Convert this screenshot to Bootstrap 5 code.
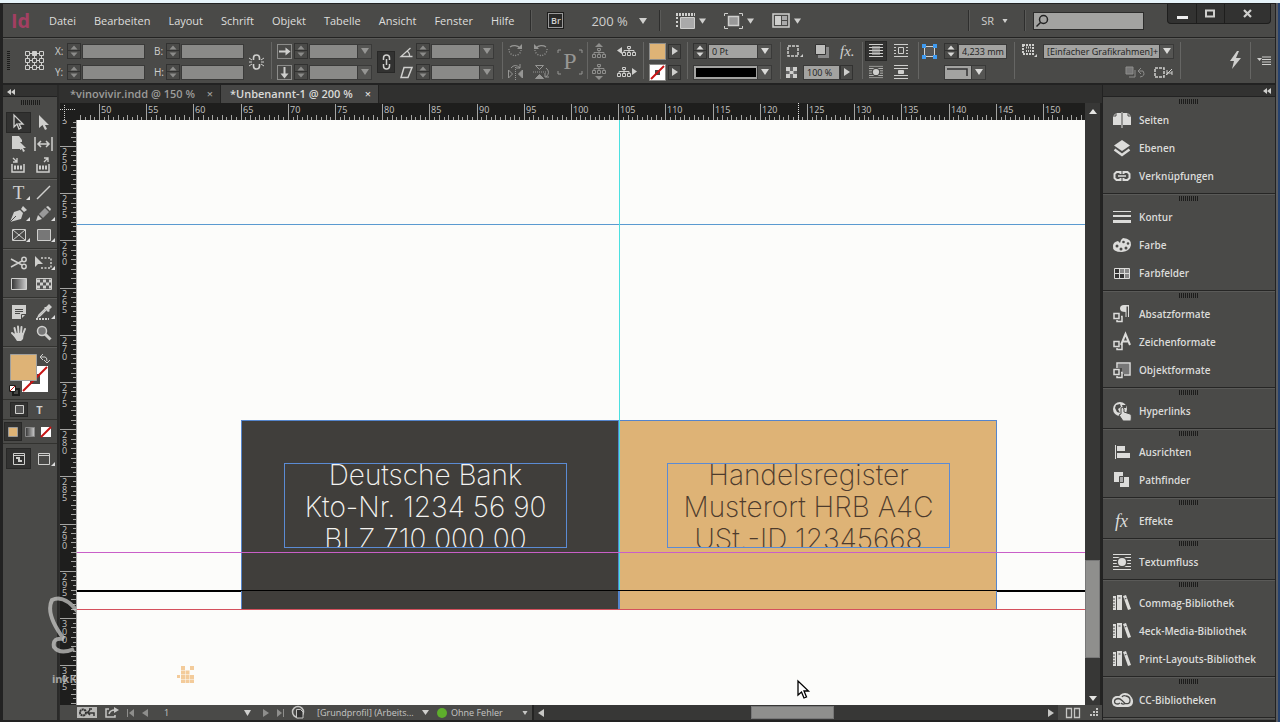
<!DOCTYPE html>
<html lang="de">
<head>
<meta charset="utf-8">
<meta name="viewport" content="width=device-width, initial-scale=1">
<title>Unbenannt-1 @ 200 %</title>
<link rel="stylesheet" href="https://cdn.jsdelivr.net/npm/bootstrap@5.3.0/dist/css/bootstrap.min.css">
<style>
:root{--panel:#4a4a48;--edge:#2a2a29;--ink:#cfcfcd;--field:#a3a3a1;--dim:#8a8a88;--tan:#deb376}
body{height:100vh;min-height:600px;overflow:hidden;font-family:"Open Sans","Noto Sans",sans-serif;font-size:11px;line-height:16px;color:var(--ink);
 background:linear-gradient(to left,#26426f 0 2px,#5b5d60 2px 4px,#222 4px 5px,#222 5px)}
button,select,input{font:inherit;color:inherit;border:0;background:none;padding:0;margin:0;border-radius:0}
select,input{appearance:none;min-width:0}
svg{display:block;overflow:visible}
.ico{fill:currentColor;stroke:none;flex:none}
.ln{fill:none;stroke:currentColor}
.faded{color:#8e8e8c}
.skyline{height:3px;background:#e6f3f9}
.appwin{margin:1px 5px 2px 3px;min-height:0}
.appwin,.minh{min-height:0}
.minw{min-width:0}
.menubar{height:33px;background:var(--panel);padding-left:8px;position:relative}
.menubar .vsep{height:21px}
.brand{font-size:20px;line-height:30px;font-weight:700;color:#a23f62;width:38px}
.brand:hover{color:#a23f62}
.menus{gap:18px}
.menus a{color:#dededc;text-decoration:none}
.userarea{margin-right:131px}
.vsep{width:1px;background:#2e2e2d;box-shadow:1px 0 #5a5a58;flex:none}
.bridge{border:1px solid #1d1d1c;outline:1px solid #999;outline-offset:-2px;width:17px;height:17px;font-size:9px;line-height:15px;background:#292928;font-weight:600}
.zoomsel{width:60px;margin-left:27px;font-size:13px;line-height:18px;background:url("data:image/svg+xml,%3Csvg xmlns='http://www.w3.org/2000/svg' width='8' height='6'%3E%3Cpath d='M0 0h8L4 6z' fill='%23d0d0ce'/%3E%3C/svg%3E") no-repeat right 4px center}
.viewbtn{margin-left:18px}
.find{width:111px;height:18px;background:var(--field);border:1px solid #2c2c2b;padding-left:20px;color:#222}
.findwrap svg{position:absolute;left:2px;top:2px;color:#222}
.winbtns{position:absolute;right:4px;top:0;height:20px;background:#323231;border:1px solid #1e1e1d;border-top:0;border-radius:0 0 4px 4px}
.winbtns button{width:28px;border-left:1px solid #1e1e1d}
.winbtns button:first-child{border-left:0}
.winbtns button:last-child{width:46px}

.ctl{height:46px;background:var(--panel);border-top:1px solid #232322;box-shadow:inset 0 1px #5a5a58;padding:5px 4px 0 4px;margin-bottom:2px}
.ctl>*{flex:none}
.ctl .vsep{height:37px;background:#666664;box-shadow:none;margin-top:-1px}
.vgrip{width:3px;height:20px;background:repeating-linear-gradient(#1c1c1b 0 1px,transparent 1px 2px)}
.refpoint{margin-left:15px}
.unlink{margin:11px 7px 0 5px}
.linkbtn{width:18px;height:22px;margin:8px 0 0 5px;place-items:center}
.grp{display:grid;grid-template-rows:16px 16px;row-gap:5px;align-items:center;justify-items:start;font-size:10px}
.g1{grid-template-columns:12px 15px 63px 9px 12px 15px 63px;margin-left:11px}
.g2{grid-template-columns:17px 15px 63px;margin-left:5px}
.g3{grid-template-columns:16px 15px 63px;margin:0 8px 0 5px}
.g4{grid-template-columns:26px 18px;margin-left:4px;color:#969694}
.g5{grid-template-columns:25px 20px;margin:0 6px 0 4px}
.g6{grid-template-columns:19px 13px;margin:0 6px 0 5px}
.g7{grid-template-columns:15px 64px;margin:0 8px 0 5px}
.g8{grid-template-columns:17px 37px 15px;margin:0 7px 0 5px}
.g9{grid-template-columns:22px 16px;column-gap:7px;margin:0 8px 0 2px}
.g10{grid-template-columns:22px 14px 49px;margin:0 7px 0 3px}
.g11{grid-template-columns:21px 131px;margin:0 6px 0 7px}
.wide{grid-column:span 2}
.spin{width:14px;height:16px;border:1px solid #323231;background:linear-gradient(transparent 6px,#323231 6px 7px,transparent 7px);color:#8c8c8a}
.spin.on{color:#d8d8d6}
.fld{width:100%;height:15px;background:var(--dim);border:1px solid #3a3a39;color:#1c1c1b;font-size:9px;line-height:13px;padding-left:3px}
.fld.on{background-color:var(--field)}
.cmb{background:url("data:image/svg+xml,%3Csvg xmlns='http://www.w3.org/2000/svg' width='15' height='15'%3E%3Cpath d='M0 0h15v15H0z' fill='%23555553'/%3E%3Cpath d='M0 0h1v15H0z' fill='%233a3a39'/%3E%3Cpath d='M4 4h8L8 10z' fill='%23959593'/%3E%3C/svg%3E") no-repeat right -1px center var(--dim)}
.cmb.on{background-image:url("data:image/svg+xml,%3Csvg xmlns='http://www.w3.org/2000/svg' width='15' height='15'%3E%3Cpath d='M0 0h15v15H0z' fill='%23555553'/%3E%3Cpath d='M0 0h1v15H0z' fill='%233a3a39'/%3E%3Cpath d='M4 4h8L8 10z' fill='%23dadad8'/%3E%3C/svg%3E")}
.strokewrap{width:100%;position:relative}
.strokewrap::after{content:"";position:absolute;left:3px;right:16px;top:3px;bottom:3px;background:#000;pointer-events:none}
.strokewrap .fld{display:block}
.cornersel{width:42px}
.step{width:13px;height:15px;border:1px solid #323231;display:grid;place-items:center}
.chip{width:17px;height:17px;border:1px solid #8c8c8a;background:var(--tan)}
.down{background:#323231;border:1px solid #282827}
.wrapbtn{height:20px;place-items:center}
.pbox{width:26px;font:24px/36px "Liberation Serif",serif;color:#969694;height:37px;text-align:center;margin:0 4px 0 6px}
.pbox svg{top:6px}
.fx{font:italic 15px/16px "Liberation Serif",serif}
.boltsep{margin-left:9px}
.flyout{margin:13px 0 0 6px}

.dockhead{height:12px;background:#323231;border-bottom:1px solid #222}
.grip{height:5px;width:19px;background:repeating-linear-gradient(to right,#1c1c1b 0 1px,transparent 1px 2px)}
.tools{width:56px;background:var(--panel);border-right:2px solid #2a2a29}
.tools>.grip{margin:3px auto 4px}
.toolset{display:grid;grid-template-columns:25px 25px;grid-auto-rows:21px;padding:3px 2px 3px 3px;border-bottom:1px solid #32322f;box-shadow:0 1px #5c5c5a}
.toolset button{display:grid;place-items:center;position:relative}
.toolset .more::after{content:"";position:absolute;right:1px;bottom:3px;border:2px solid transparent;border-right-color:#ddd;border-bottom-color:#ddd}
.typetool{font:19px/20px "Liberation Serif",serif}
.inks{height:53px;padding:6px 0 0 5px;border-bottom:1px solid #32322f}
.modes{height:20px;padding:0 3px;border-bottom:1px solid #32322f}
.modes button{display:grid;place-items:center;height:19px;width:23px}
.modes .boxmode{width:18px;height:15px}
.inkmodes{height:24px;padding-left:1px}
.inkmodes button{width:16px}
.inkmodes button.down{width:18px}

.work{background:#30302f;padding-left:1px}
.tabs{height:18px;background:#30302f;font-weight:600}
.tabs .doctab{width:161px;padding:0 5px 0 10px;color:#9c9c9a;border-right:1px solid #232322}
.tabs .doctab.cur{width:158px;padding:0 5px 0 9px;background:#464645;color:#dadad8}
.tabs button{width:10px;line-height:12px}
.tabs a{color:inherit;text-decoration:none}
.rulers{height:17px;background:#1e1e1d}
.rcorner{width:17px}
.rleft{width:17px;background:#1e1e1d;border-right:1px solid #aaa}
.rulers text,.rleft text{font-size:9px;fill:#c4c4c2}
.rule{stroke:#a4a4a2;stroke-width:1;shape-rendering:crispEdges}
.sheet{background:#fcfcfa;position:relative;overflow:hidden}
.sheet>*{position:absolute}
.guide{left:0;right:0;height:1px}
.guide.rowline{top:104px;background:#5a9ad0}
.guide.margin{top:432px;background:#c95fc8;margin:0}
.guide.edgeline{top:470px;background:#000}
.edgeleft,.edgeright{top:471px;height:1px;background:#000}
.edgeleft{left:0;width:164px}
.edgeright{left:920px;right:0}
.guide.bleed{top:489px;background:#d4505c}
.midline{left:542px;top:0;width:1px;height:471px;background:#4be0e0}
.art{top:300px;width:378px;height:190px;border:1px solid #5585cc;border-bottom:0}
.art.dark{left:164px;background:#403e3b}
.art.gold{left:542px;background:var(--tan)}
.frame{top:343px;width:283px;height:85px;border:1px solid #5b8bd4;overflow:hidden;text-align:center;font:200 28px/32px Inter,"Open Sans",sans-serif;white-space:nowrap}
.frame div{margin:-5px -20px 0}
.frame.dark{left:207px;color:#f4f3f0}
.frame.gold{left:590px;color:#4d3b2d}
.pixmark{left:100px;top:546px}
.pointer{left:720px;top:560px}
.vbar{width:17px;background:#373736;border-right:2px solid #232322}
.vbar svg:first-child{margin-top:6px}
.thumb{background:#8f8f8d;border:1px solid #777}
.v1{flex:448}.v2{flex:96}.v3{flex:38}
.h1s{flex:211}.h2s{flex:82;height:13px}.h3s{flex:218}
.status{height:15px;background:var(--panel);font-size:9px;line-height:15px;color:#c6c6c4}
.status>*{flex:none}
.settings{margin-left:17px}
.pagesel{width:87px;margin:0 12px 0 8px;background:url("data:image/svg+xml,%3Csvg xmlns='http://www.w3.org/2000/svg' width='7' height='6'%3E%3Cpath d='M0 0h7L3.500 6z' fill='%23d0d0ce'/%3E%3C/svg%3E") no-repeat right center}
.flight{width:112px;margin-left:12px;background:url("data:image/svg+xml,%3Csvg xmlns='http://www.w3.org/2000/svg' width='7' height='5'%3E%3Cpath d='M0 0h7L3.500 5z' fill='%23d0d0ce'/%3E%3C/svg%3E") no-repeat right center}
.lamp{width:10px;height:10px;background:#5eae2c}
.errors{width:77px;margin:0 4px 0 0}
.hbar{background:#373736;border-left:2px solid #242423}
.watermark{position:absolute;left:48px;bottom:35px;width:28px;height:91px;overflow:hidden;color:#d0d0ce;opacity:.7;font-size:11px;font-weight:700}

.dock{width:173px;background:var(--panel);border-left:1px solid #222}
.pgroup{padding:9px 0 3px;border-bottom:1px solid #262625;box-shadow:0 1px #5a5a58;position:relative}
.pgroup .grip{position:absolute;left:76px;top:2px}
.pgroup button{display:flex;align-items:center;gap:8px;height:28px;padding-left:10px;width:100%;font-size:10px;font-weight:600;text-align:left;color:#dcdcda}
.fxicon{width:18px;padding-left:2px;font:italic 18px/18px "Liberation Serif",serif}
</style>
</head>
<body class="d-flex flex-column">
<svg width="0" height="0" class="position-absolute" aria-hidden="true">
 <symbol id="updn" viewBox="0 0 12 14"><path d="M2.500 5.500h7L6 1.500zM2.500 8.500h7L6 12.500z"/></symbol>
 <symbol id="dn" viewBox="0 0 8 6"><path d="M0 0h8L4 6z"/></symbol>
 <symbol id="rt" viewBox="0 0 6 8"><path d="M0 0v8l6-4z"/></symbol>
 <symbol id="lt" viewBox="0 0 6 8"><path d="M6 0v8L0 4z"/></symbol>
 <symbol id="dbl" viewBox="0 0 8 6"><path d="M4 0v6L0 3zM8 0v6L4 3z"/></symbol>
 <symbol id="tree" viewBox="0 0 14 10"><path class="ln" d="M5.500.500h3v2h-3zM.5 6.500h3v3h-3zM5.500 6.500h3v3h-3zM10.500 6.500h3v3h-3zM7 3v3M2 6V4.500h10V6"/></symbol>
 <symbol id="books" viewBox="0 0 18 16"><path d="M0 1h3v14H0zM4 0h5v15H4zM10 1l3-1 5 14-3 1z"/><path d="M1 3v10M5.500 3h2M11.500 4l2-.6" stroke="#4a4a48" fill="none" stroke-dasharray="2 1"/></symbol>
 <symbol id="wrapc" viewBox="0 0 18 16"><path class="ln" stroke-width="1" d="M0 .5h18M0 3.500h18M0 6.500h4M14 6.500h4M0 9.500h4M14 9.500h4M0 12.500h18M0 15.500h18"/><circle cx="9" cy="8" r="5.500" fill="#4a4a48"/><circle cx="9" cy="8" r="4"/></symbol>
 <symbol id="style" viewBox="0 0 18 18"><path class="ln" stroke-width="1.500" d="M1 8.500h5v5H1z"/><path class="ln" stroke-width="1.500" d="M8 11.500h1v5H4V15"/></symbol>
</svg>
<div class="skyline flex-shrink-0"></div>
<div class="appwin d-flex flex-column flex-grow-1">

<header class="menubar d-flex align-items-center flex-shrink-0">
 <a class="brand text-decoration-none" href="#">Id</a>
 <nav class="menus d-flex" aria-label="Hauptmenü">
  <a href="#">Datei</a><a href="#">Bearbeiten</a><a href="#">Layout</a><a href="#">Schrift</a><a href="#">Objekt</a><a href="#">Tabelle</a><a href="#">Ansicht</a><a href="#">Fenster</a><a href="#">Hilfe</a>
 </nav>
 <span class="vsep ms-3 me-3"></span>
 <button class="bridge" type="button">Br</button>
 <select class="zoomsel" aria-label="Zoomstufe"><option>200 %</option></select>
 <span class="vsep mx-2"></span>
 <button class="d-flex align-items-center gap-1 ms-2" type="button" aria-label="Anzeigeoptionen"><svg class="ico" width="19" height="16"><path d="M5 5h13v10H5z" fill="#aaa"/><path class="ln" d="M4.500 15.500V4.500h14v11z"/><path class="ln" d="M0 1.500h19" stroke-width="3" stroke-dasharray="2 1"/><path class="ln" d="M1 4v12" stroke-width="2" stroke-dasharray="2 2"/></svg><svg class="ico" width="7" height="6"><use href="#dn"/></svg></button>
 <button class="d-flex align-items-center gap-1 viewbtn" type="button" aria-label="Bildschirmmodus"><svg class="ico" width="19" height="16"><path d="M5 4h9v8H5z" fill="#999"/><path class="ln" d="M4.500 3.500h10v9h-10z" stroke-width="1.500"/><path class="ln" d="M.5 3V.5H4M15 .5h3.500V3M.5 13v2.500H4M15 15.500h3.500V13"/></svg><svg class="ico" width="7" height="6"><use href="#dn"/></svg></button>
 <button class="d-flex align-items-center gap-1 viewbtn" type="button" aria-label="Dokumente anordnen"><svg class="ico" width="18" height="15"><path class="ln" stroke-width="1.500" d="M1 1h16v13H1z"/><path d="M3 3h6v9H3z"/><path d="M10 3h5v4h-5zM10 8h5v4h-5z" fill="#aaa"/></svg><svg class="ico" width="7" height="6"><use href="#dn"/></svg></button>
 <div class="d-flex align-items-center ms-auto userarea">
  <span class="vsep me-2"></span>
  <button class="d-flex align-items-center gap-2 ms-1" type="button"><span>SR</span><svg class="ico" width="6" height="4" viewBox="0 0 8 6"><use href="#dn"/></svg></button>
  <span class="vsep ms-3 me-2"></span>
  <label class="findwrap position-relative"><input class="find" type="search" aria-label="Suche"><svg class="ln" width="14" height="14" stroke-width="1.500"><circle cx="8.500" cy="5.500" r="4"/><path d="M5.500 8.500L1.500 12.500"/></svg></label>
 </div>
 <div class="winbtns d-flex">
  <button type="button" aria-label="Minimieren"><svg class="ico mx-auto" width="11" height="12"><path d="M0 8h11v3H0z" fill="#eee"/></svg></button>
  <button type="button" aria-label="Maximieren"><svg class="ln mx-auto" width="11" height="9" stroke="#eee" stroke-width="2"><path d="M1 1.500h8v6H1z"/></svg></button>
  <button type="button" aria-label="Schließen"><svg class="ln mx-auto" width="10" height="9" stroke="#eee" stroke-width="2.200"><path d="M1 1l7 7M8 1L1 8"/></svg></button>
 </div>
</header>

<section class="ctl d-flex flex-shrink-0" aria-label="Steuerung">
 <span class="mt-2 vgrip"></span>
 <svg class="ln mt-2 refpoint" width="19" height="19"><path d="M2.500 2.500h14v14h-14zM2.500 9.500h14M9.500 2.500v14"/><path fill="#4a4a48" d="M.5.500h4v4h-4zM14.500.500h4v4h-4zM.5 7.500h4v4h-4zM7.500 7.500h4v4h-4zM14.500 7.500h4v4h-4zM.5 14.500h4v4h-4zM7.500 14.500h4v4h-4zM14.500 14.500h4v4h-4z"/><path fill="currentColor" d="M7.500.500h4v4h-4z"/></svg>
 <div class="grp g1">
  <label for="fx">X:</label><button class="spin" type="button" aria-label="X ändern"><svg class="ico" width="12" height="14"><use href="#updn"/></svg></button><input class="fld" id="fx"><i></i><label for="fb">B:</label><button class="spin" type="button" aria-label="B ändern"><svg class="ico" width="12" height="14"><use href="#updn"/></svg></button><input class="fld" id="fb">
  <label for="fy">Y:</label><button class="spin" type="button" aria-label="Y ändern"><svg class="ico" width="12" height="14"><use href="#updn"/></svg></button><input class="fld" id="fy"><i></i><label for="fh">H:</label><button class="spin" type="button" aria-label="H ändern"><svg class="ico" width="12" height="14"><use href="#updn"/></svg></button><input class="fld" id="fh">
 </div>
 <svg class="ln unlink" width="15" height="16" stroke-width="1.600"><path d="M4.500 6V4a3 3 0 0 1 6 0v2M4.500 10v2a3 3 0 0 0 6 0v-2"/><path stroke-width="1" d="M0 8h3M12 8h3M0 4l3 2M15 4l-3 2M0 12l3-2M15 12l-3-2"/></svg>
 <span class="vsep"></span>
 <div class="grp g2">
  <svg class="ln" width="15" height="15"><path stroke-dasharray="1 1" d="M.5.500h14v14H.5z"/><path stroke-width="2" d="M2 7.500h8"/><path fill="currentColor" stroke="none" d="M8.500 3.500l5 4-5 4z"/></svg><button class="spin" type="button" aria-label="Skalierung X"><svg class="ico" width="12" height="14"><use href="#updn"/></svg></button><select class="fld cmb" aria-label="X-Skalierung"><option></option></select>
  <svg class="ln" width="15" height="15"><path stroke-dasharray="1 1" d="M.5.500h14v14H.5z"/><path stroke-width="2" d="M7.500 2v8"/><path fill="currentColor" stroke="none" d="M3.500 8.500l4 5 4-5z"/></svg><button class="spin" type="button" aria-label="Skalierung Y"><svg class="ico" width="12" height="14"><use href="#updn"/></svg></button><select class="fld cmb" aria-label="Y-Skalierung"><option></option></select>
 </div>
 <button class="down d-grid linkbtn" type="button" aria-label="Proportionen verketten"><svg class="ln" width="9" height="16" stroke-width="1.500"><path d="M1.500 6V4a3 3 0 0 1 6 0v2M1.500 10v2a3 3 0 0 0 6 0v-2M4.500 5v6"/></svg></button>
 <div class="grp g3">
  <svg class="ln" width="13" height="13" stroke-width="1.300"><path d="M12.500 11.500H1L10.500 3M7 6q3 2 2.500 5.500"/></svg><button class="spin" type="button" aria-label="Drehen"><svg class="ico" width="12" height="14"><use href="#updn"/></svg></button><select class="fld cmb" aria-label="Drehwinkel"><option></option></select>
  <svg class="ln" width="13" height="13" stroke-width="1.500"><path d="M4 1.500h8l-4 10H1z"/></svg><button class="spin" type="button" aria-label="Scheren"><svg class="ico" width="12" height="14"><use href="#updn"/></svg></button><select class="fld cmb" aria-label="Scherwinkel"><option></option></select>
 </div>
 <span class="vsep"></span>
 <div class="grp g4">
  <svg class="ln" width="17" height="16" stroke-width="1.300"><path d="M3 4a7 6 0 0 1 10 1"/><path stroke-dasharray="1 1.500" d="M14 7a6 6 0 1 1-12-1"/><path fill="currentColor" stroke="none" d="M10 6h5V1z"/></svg>
  <svg class="ln" width="17" height="16" stroke-width="1.300"><path d="M13 4a7 6 0 0 0-10 1"/><path stroke-dasharray="1 1.500" d="M2 7a6 6 0 1 0 12-1"/><path fill="currentColor" stroke="none" d="M6 6H1V1z"/></svg>
  <svg class="ln" width="17" height="16"><path d="M4 4q4-5 9 0M13 0v4H9" /><path stroke-dasharray="1 1" d="M8.500 3v13"/><path fill="currentColor" d="M15.500 6v8l-4-4z"/><path d="M1.500 6v8l4-4z"/></svg>
  <svg class="ln" width="17" height="16"><path d="M13 4q5 4 0 9M16 13h-4V9"/><path stroke-dasharray="1 1" d="M0 8h14"/><path fill="currentColor" d="M2.500 14.500h8l-4-4z"/><path d="M2.500 1.500h8l-4 4z"/></svg>
 </div>
 <div class="pbox position-relative">P<svg class="ln position-absolute start-0" width="26" height="26"><path d="M1 4V1h3M22 1h3v3M1 22v3h3M22 25h3v-3"/></svg></div>
 <span class="vsep"></span>
 <div class="grp g5">
  <svg class="ico faded" width="14" height="16"><path d="M3 4h8L7 0z"/><use href="#tree" y="5" width="14" height="10"/></svg>
  <svg class="ico" width="20" height="14"><path d="M5 3v7L0 6.500z"/><use href="#tree" x="5" y="2" width="14" height="10"/></svg>
  <svg class="ico faded" width="14" height="16"><path d="M3 12h8l-4 4z"/><use href="#tree" width="14" height="10"/></svg>
  <svg class="ico" width="20" height="14"><path d="M15 3v7l5-3.500z"/><use href="#tree" y="2" width="14" height="10"/></svg>
 </div>
 <span class="vsep"></span>
 <div class="grp g6">
  <span class="chip"></span><button class="step" type="button" aria-label="Fläche"><svg class="ico" width="6" height="8"><use href="#rt"/></svg></button>
  <svg width="17" height="17"><path fill="#fff" stroke="#8c8c8a" d="M.5.500h16v16H.5z"/><path fill="#4a4a48" d="M6 6h5v5H6z"/><path stroke="#c81414" stroke-width="2" d="M2 15L15 2"/></svg><button class="step" type="button" aria-label="Kontur"><svg class="ico" width="6" height="8"><use href="#rt"/></svg></button>
 </div>
 <span class="vsep"></span>
 <div class="grp g7">
  <button class="spin on" type="button" aria-label="Konturstärke ändern"><svg class="ico" width="12" height="14"><use href="#updn"/></svg></button><select class="fld cmb on" aria-label="Konturstärke"><option>0 Pt</option></select>
  <div class="strokewrap wide"><select class="fld cmb on" aria-label="Konturtyp"><option></option></select></div>
 </div>
 <span class="vsep"></span>
 <div class="grp g8">
  <svg class="ln" width="17" height="14" stroke-width="1.500"><path stroke-dasharray="3 1" d="M2 2h10v10H2z"/><path stroke="none" fill="currentColor" d="M14 13h3v-3z"/></svg>
  <svg class="mx-auto" width="14" height="14"><path fill="#888" d="M3 3h11v11H3z"/><path fill="#bdbdbb" stroke="#333" d="M.5.500h10v10H.5z"/></svg>
  <button class="fx" type="button">fx.</button>
  <svg class="ico" width="11" height="11"><path fill="#666" d="M0 0h11v11H0z"/><path d="M0 0h4v4H0zM7 0h4v4H7zM3.500 4h4v3h-4zM0 7h4v4H0zM7 7h4v4H7z"/></svg>
  <input class="fld on" aria-label="Deckkraft" value="100 %"><button class="step" type="button" aria-label="Deckkraft wählen"><svg class="ico" width="6" height="8"><use href="#rt"/></svg></button>
 </div>
 <span class="vsep"></span>
 <div class="grp g9">
  <button class="down w-100 d-grid wrapbtn" type="button" aria-label="Kein Textumfluss"><svg class="ln" width="14" height="14"><path d="M0 .5h14M0 3.500h14M0 6.500h14M0 9.500h14M0 12.500h14"/><path stroke-width="9" stroke="#bbb" d="M3 6.500h8" opacity=".6"/></svg></button>
  <svg class="ln" width="14" height="14"><path d="M0 .5h14M0 12.500h14M0 3.500h2M12 3.500h2M0 6.500h2M12 6.500h2M0 9.500h2M12 9.500h2M4.500 3.500h5v6h-5z"/></svg>
  <svg class="ico mx-auto" width="14" height="14" viewBox="0 0 18 16"><use href="#wrapc"/></svg>
  <svg class="ln" width="14" height="14"><path d="M0 .5h14M0 3.500h14M0 10.500h14M0 13.500h14"/><path fill="currentColor" d="M4.500 5.500h5v3h-5z"/></svg>
 </div>
 <span class="vsep"></span>
 <div class="grp g10">
  <svg class="ln" width="15" height="15"><path fill="#555" d="M2.500 2.500h10v10h-10z"/><path stroke="none" fill="#3f9af0" d="M0 0h4v4H0zM11 0h4v4h-4zM0 11h4v4H0zM11 11h4v4h-4z"/></svg><button class="spin on" type="button" aria-label="Eckenradius ändern"><svg class="ico" width="12" height="14"><use href="#updn"/></svg></button><input class="fld on" aria-label="Eckenradius" value="4,233 mm">
  <i></i><div class="wide position-relative"><select class="fld cmb on cornersel" aria-label="Eckenform"><option></option></select><svg class="position-absolute start-0 top-0" width="26" height="15"><path fill="none" stroke="#333" stroke-width="1.500" d="M3 5h20v7"/></svg></div>
 </div>
 <span class="vsep"></span>
 <div class="grp g11">
  <svg class="ln" width="15" height="14"><path stroke-width="2" stroke-dasharray="2 1" d="M1 1h10v9H1z"/><path stroke-width="2" stroke-dasharray="1 1" d="M4 3.500h5M4 7h5"/><path stroke="none" fill="currentColor" d="M12 13h3v-3z"/></svg>
  <select class="fld cmb on" aria-label="Objektformat"><option>[Einfacher Grafikrahmen]+</option></select>
  <div class="wide ms-auto d-flex gap-2"><svg class="ln faded" width="21" height="13"><path fill="#777" d="M1 1h7v7H1z"/><path d="M10 4v7H4M14 5h4q3 5-3 6M16 2l-3 3 3 3"/></svg><svg class="ln" width="20" height="13"><path stroke-width="1.500" stroke-dasharray="3 1" d="M1 2h9v9H1z"/><path d="M12 9l6-6M13 4v5M18 5v4M13 7h5"/></svg></div>
 </div>
 <span class="vsep"></span>
 <svg class="ico ms-auto mt-2" width="11" height="18"><path d="M7 0L0 10h4l-2 8 9-11H6l3-7z"/></svg>
 <span class="vsep boltsep"></span>
 <svg class="ico flyout" width="14" height="9"><path d="M0 2h5L2.500 5z"/><path class="ln" d="M5 1h9M5 3.500h9M5 6h9M5 8.500h9"/></svg>
</section>

<div class="d-flex flex-grow-1 minh">
 <aside class="tools flex-shrink-0" aria-label="Werkzeuge">
  <div class="dockhead ps-1 pt-1"><svg class="ico" width="8" height="6"><use href="#dbl"/></svg></div>
  <div class="grip"></div>
  <div class="toolset">
   <button class="down" type="button" aria-label="Auswahl"><svg class="ln" width="14" height="17"><path stroke-width="1.300" d="M2 1v12l3-3 2 5 2-1-2-4h4z"/></svg></button>
   <button type="button" aria-label="Direktauswahl"><svg class="ico" width="11" height="16"><path d="M1 0v13l3.500-3L7 15l2-1-2-4h4z"/></svg></button>
   <button type="button" aria-label="Seite"><svg class="ico" width="15" height="15"><path d="M1 0h7l3 4v2H9v7H1zM9 6l6 6h-3l2 3-2 1-1-3-2 1z"/></svg></button>
   <button type="button" aria-label="Lücke"><svg class="ln" width="19" height="14" stroke-width="2"><path d="M1 0v14M18 0v14M4 7h11M7 4L4 7l3 3M12 4l3 3-3 3" stroke-width="1.500"/></svg></button>
   <button type="button" aria-label="Inhaltsaufnahme"><svg class="ln" width="15" height="16"><path stroke-width="1.500" d="M1 7v8h12V7"/><path stroke-width="4" stroke-dasharray="2 1" d="M3 10.500h9"/><path stroke-width="1.300" d="M2 1l4 4M6 1v4H2"/></svg></button>
   <button type="button" aria-label="Inhaltsplatzierung"><svg class="ln" width="15" height="16"><path stroke-width="1.500" d="M1 7v8h12V7"/><path stroke-width="4" stroke-dasharray="2 1" d="M3 10.500h9"/><path stroke-width="1.300" d="M8 5l4-4M8 1h4v4"/></svg></button>
  </div>
  <div class="toolset">
   <button class="more typetool" type="button" aria-label="Text">T</button>
   <button type="button" aria-label="Linie"><svg class="ln" width="13" height="13" stroke-width="1.500"><path d="M0 13L13 0"/></svg></button>
   <button class="more" type="button" aria-label="Zeichenstift"><svg class="ico" width="17" height="16"><path d="M0 16L4 6l6-2 3 3-2 6z"/><path d="M11 3l2-3 4 4-3 2z"/><path stroke="#4a4a48" d="M0 16l6-6"/></svg></button>
   <button class="more" type="button" aria-label="Buntstift"><svg class="ico" width="15" height="15"><path d="M0 15l2-6 4 4z"/><path d="M3 8l6-6 4 4-6 6z" fill="#999"/><path d="M10 1l2-1 3 3-1 2z"/></svg></button>
   <button class="more" type="button" aria-label="Rechteckrahmen"><svg class="ln" width="14" height="12"><path d="M.5.500h13v11H.5zM1 1l12 10M13 1L1 11"/></svg></button>
   <button class="more" type="button" aria-label="Rechteck"><svg class="ln" width="14" height="12"><path fill="#777" d="M.5.500h13v11H.5z"/></svg></button>
  </div>
  <div class="toolset">
   <button type="button" aria-label="Schere"><svg class="ln" width="16" height="14" stroke-width="1.500"><path d="M0 3l11 6M0 11l11-6"/><circle cx="13" cy="3.500" r="2.200"/><circle cx="13" cy="10.500" r="2.200"/></svg></button>
   <button class="more" type="button" aria-label="Frei transformieren"><svg class="ln" width="17" height="14" stroke-width="1.500"><path stroke-dasharray="2 1.500" d="M6 2h10v10H5"/><path fill="currentColor" stroke="none" d="M0 0v11l3-3 5 0z"/></svg></button>
   <button type="button" aria-label="Verlaufsfarbfeld"><svg width="16" height="12"><defs><linearGradient id="gr"><stop stop-color="#333"/><stop offset="1" stop-color="#ccc"/></linearGradient></defs><path fill="url(#gr)" stroke="#d0d0ce" d="M.5.500h15v11H.5z"/></svg></button>
   <button type="button" aria-label="Weiche Verlaufskante"><svg class="ln" width="16" height="12"><path fill="#555" d="M.5.500h15v11H.5z"/><path stroke-width="3" stroke-dasharray="3 3" d="M1 3h14M4 6h11M1 9h14"/></svg></button>
  </div>
  <div class="toolset">
   <button type="button" aria-label="Notiz"><svg class="ico" width="14" height="14"><path d="M0 0h14v9l-5 5H0z"/><path stroke="#4a4a48" fill="none" d="M3 4.500h8M3 6.500h8M3 8.500h5M9.500 14V9.500H14"/></svg></button>
   <button class="more" type="button" aria-label="Pipette"><svg class="ico" width="16" height="16"><path d="M10 3l3-3 3 3-3 3 1 1-2 1-4-4 1-1z"/><path class="ln" stroke-width="1.300" d="M9 5l-6 6-1 2 2-1 6-6"/><path class="ln" stroke-width="2" stroke-dasharray="2 1" d="M0 15h13"/></svg></button>
   <button type="button" aria-label="Hand"><svg class="ln" width="16" height="16" stroke-width="2" stroke-linecap="round"><path d="M5 9L3.500 3M7.500 8L7 1.500M10 8l.5-6M12 9l2-5M4 11L1 8"/><path fill="currentColor" stroke="none" d="M4 8h9l-1 6-2 2H6l-4-6z"/></svg></button>
   <button type="button" aria-label="Zoom"><svg class="ln" width="16" height="16"><circle cx="6" cy="6" r="4.500" fill="#777" stroke-width="1.500"/><path stroke-width="3" d="M9 9l5.500 5.500"/></svg></button>
  </div>
  <div class="inks">
   <svg width="45" height="46"><path fill="#fff" d="M14 13h26v26H14z"/><path fill="#4a4a48" d="M22 21h10v10H22z"/><path stroke="#c81414" stroke-width="2" d="M15 38L39 14"/><path fill="#deb376" stroke="#a0a09e" d="M2.500 1.500h26v26h-26z"/><path fill="none" stroke="#cfcfcd" d="M33 4h4q2 0 2 4M35 1l-3 3 3 3M36 7l3 3 3-3"/><path fill="none" stroke="#1c1c1b" stroke-width="2" d="M5 36h6v6H5z"/><path fill="#fff" stroke="#1c1c1b" d="M1.500 32.500h6v6h-6z"/><path stroke="#c81414" d="M2 38l5-5"/></svg>
  </div>
  <div class="modes d-flex align-items-center">
   <button class="down ms-1 boxmode" type="button" aria-label="Container"><svg class="ln" width="9" height="9"><path fill="#555" d="M.5.500h8v8h-8z"/></svg></button>
   <button class="fw-bold" type="button" aria-label="Text formatieren">T</button>
  </div>
  <div class="modes inkmodes d-flex align-items-center">
   <button class="down" type="button" aria-label="Farbe anwenden"><svg width="10" height="10"><path fill="#deb376" stroke="#999" d="M.5.500h9v9h-9z"/></svg></button>
   <button type="button" aria-label="Verlauf anwenden"><svg width="10" height="10"><path fill="url(#gr)" stroke="#888" d="M.5.500h9v9h-9z"/></svg></button>
   <button type="button" aria-label="Ohne"><svg width="10" height="10"><path fill="#fff" d="M0 0h10v10H0z"/><path stroke="#c81414" stroke-width="2" d="M0 10L10 0"/></svg></button>
  </div>
  <div class="toolset border-0 shadow-none pt-1">
   <button class="down" type="button" aria-label="Normal"><svg class="ln" width="12" height="12"><path d="M.5.500h11v11H.5zM.5 2.500h11"/><path stroke-width="2" d="M3 5h3v3h3"/></svg></button>
   <button class="more" type="button" aria-label="Vorschau"><svg class="ln" width="12" height="12"><path d="M.5.500h11v11H.5zM.5 2.500h11"/></svg></button>
  </div>
 </aside>

 <main class="work d-flex flex-column flex-grow-1 minw">
  <div class="tabs d-flex flex-shrink-0">
   <div class="doctab d-flex align-items-center justify-content-between"><a href="#">*vinovivir.indd @ 150 %</a><button type="button" aria-label="Tab schließen">×</button></div>
   <div class="doctab cur d-flex align-items-center justify-content-between"><a href="#">*Unbenannt-1 @ 200 %</a><button type="button" aria-label="Tab schließen">×</button></div>
  </div>
  <div class="d-flex flex-grow-1 minh">
   <div class="d-flex flex-column flex-grow-1 minw">
    <div class="rulers d-flex flex-shrink-0">
     <svg class="ln rcorner flex-shrink-0" width="17" height="17"><path stroke-dasharray="1 1" d="M4.500 2v15M0 6.500h16"/></svg>
     <div class="flex-grow-1 overflow-hidden"><svg id="hr" width="100%" height="17"></svg></div>
    </div>
    <div class="d-flex flex-grow-1 minh">
     <div class="rleft flex-shrink-0 overflow-hidden"><svg id="vr" width="16" height="100%"></svg></div>
     <div class="sheet flex-grow-1">
      <div class="art dark"></div>
      <div class="art gold"></div>
      <div class="frame dark"><div>Deutsche Bank<br>Kto-Nr. 1234 56 90<br>BLZ 710 000 00</div></div>
      <div class="frame gold"><div>Handelsregister<br>Musterort HRB A4C<br>USt.-ID 12345668</div></div>
      <div class="guide rowline"></div>
      <div class="midline"></div>
      <div class="guide margin"></div>
      <div class="guide edgeline"></div>
      <div class="edgeleft"></div>
      <div class="edgeright"></div>
      <div class="guide bleed"></div>
      <svg class="pixmark" width="17" height="17" fill="#f3cb9a"><path d="M4 0h4v4H4zM13 0h4v4h-4zM4 4.500h4v4H4zM8.500 4.500h4v4h-4zM0 9h3v3H0zM4 9h4v4H4zM8.500 9h4v4h-4zM13 9h4v4h-4zM4 13.500h4V17H4zM8.500 13.500h4V17h-4zM13 13.500h4V17h-4z"/></svg>
      <svg class="pointer" width="12" height="19"><path fill="#fff" stroke="#000" stroke-width="1.300" d="M1 1v14l3.500-3 2.500 6 2.500-1L7 11h4.500z"/></svg>
     </div>
    </div>
   </div>
   <div class="vbar d-flex flex-column flex-shrink-0">
    <svg class="ico mx-auto" width="8" height="5"><path d="M0 5h8L4 0z" fill="#e4e4e2"/></svg>
    <div class="v1"></div><div class="v2 thumb"></div><div class="v3"></div>
    <svg class="ico mx-auto mb-1" width="8" height="5"><path d="M0 0h8L4 5z" fill="#e4e4e2"/></svg>
   </div>
  </div>
  <footer class="status d-flex align-items-center flex-shrink-0">
   <svg class="settings" width="20" height="11"><path fill="#b8b8b6" d="M0 0h20v11H0z"/><circle cx="6" cy="5.500" r="3" fill="none" stroke="#333" stroke-width="2" stroke-dasharray="2 .5"/><path fill="none" stroke="#333" stroke-width="1.500" d="M17 9V6h-6M13 3l-2.500 2.500L13 8M12 2h3"/></svg>
   <svg class="ln ms-2" width="14" height="11" stroke-width="1.500"><path d="M4 2H1v8h9V8M4 7q1-4 6-4"/><path fill="currentColor" stroke="none" d="M9 0l5 3-5 3z"/></svg>
   <svg class="ico faded ms-2" width="7" height="8"><path d="M0 0h1v8H0zM7 0v8L2 4z"/></svg>
   <svg class="ico faded ms-2" width="6" height="8"><use href="#lt"/></svg>
   <select class="pagesel ms-3" aria-label="Seite"><option>1</option></select>
   <svg class="ico faded" width="6" height="8"><use href="#rt"/></svg>
   <svg class="ico faded ms-2" width="7" height="8"><path d="M6 0h1v8H6zM0 0v8l5-4z"/></svg>
   <svg class="ln ms-2" width="13" height="13"><circle cx="6" cy="6" r="5.500" stroke-width="1.500"/><path fill="#333" d="M4.500 12V3.500h4L11 6v6z"/></svg>
   <select class="flight" aria-label="Preflight-Profil"><option>[Grundprofil] (Arbeits...</option></select>
   <span class="lamp rounded-circle ms-2 me-1"></span>
   <button class="errors d-flex align-items-center justify-content-between" type="button"><span>Ohne Fehler</span><svg class="ico" width="6" height="4" viewBox="0 0 8 6"><use href="#dn"/></svg></button>
   <div class="hbar d-flex align-items-center flex-grow-1 h-100 px-1">
    <svg class="ico" width="6" height="8"><use href="#lt"/></svg><div class="h1s"></div><div class="h2s thumb"></div><div class="h3s"></div><svg class="ico" width="6" height="8"><use href="#rt"/></svg>
   </div>
   <svg class="ln ms-2" width="14" height="10" stroke-width="1.300"><path d="M.5.500h5v9h-5zM8.500.500h5v9h-5z"/></svg>
   <svg class="ico ms-2 me-1" width="10" height="9" fill="#aaa"><path d="M8 0h2v2H8zM5 3h2v2H5zM8 3h2v2H8zM2 6h2v2H2zM5 6h2v2H5zM8 6h2v2H8z"/></svg>
  </footer>
 </main>

 <aside class="dock flex-shrink-0" aria-label="Bedienfelder">
  <div class="dockhead d-flex justify-content-end align-items-center pe-1"><svg class="ico" width="8" height="6"><use href="#dbl"/></svg></div>
  <div class="pgroup"><div class="grip"></div>
   <button type="button"><svg class="ico" width="18" height="16"><path d="M0 4l3-3h5v12H0zM18 4l-3-3h-5v12h8z"/><path d="M0 4h3V1M18 4h-3V1" stroke="#4a4a48" fill="none"/><path d="M8.500 0h1v16h-1z"/></svg>Seiten</button>
   <button type="button"><svg class="ico" width="18" height="17"><path d="M9 0l8 5.500L9 11 1 5.500z"/><path class="ln" stroke-width="2.500" d="M1.500 9.500L9 15l7.500-5.500"/></svg>Ebenen</button>
   <button type="button"><svg class="ln" width="18" height="12" stroke-width="2"><path d="M7.500 4V2H3.500L1.500 4v4l2 2h4V8M10.500 4V2h4l2 2v4l-2 2h-4V8"/><path stroke-width="1.500" d="M5 6h8"/></svg>Verknüpfungen</button></div>
  <div class="pgroup"><div class="grip"></div>
   <button type="button"><svg class="ico" width="18" height="13"><path d="M0 0h18v1H0zM0 4h18v2H0zM0 9h18v3H0z"/></svg>Kontur</button>
   <button type="button"><svg class="ico" width="18" height="14"><path d="M8 2l2-2q9 1 8 7t-9 7Q-1 14 0 8q0-4 5-5l2 2z"/><g fill="#4a4a48"><circle cx="4" cy="8" r="1.500"/><circle cx="8" cy="11" r="1.500"/><circle cx="13" cy="10" r="1.500"/><circle cx="15" cy="5.500" r="1.300"/><circle cx="10.500" cy="4" r="1.300"/></g></svg>Farbe</button>
   <button type="button"><svg class="ln" width="18" height="11"><path fill="#333" d="M1.500.500h15v10h-15z"/><path stroke="none" fill="#888" d="M7 1h4v4H7zM12 1h4v4h-4zM12 6h4v4h-4z"/><path d="M6.500.500v10M11.500.500v10M1.500 5.500h15"/></svg>Farbfelder</button></div>
  <div class="pgroup"><div class="grip"></div>
   <button type="button"><svg class="ico" width="18" height="18"><path d="M16 0v12h-1V1.500h-1.500V12h-1V7Q7 7 7 3.500T11 0z"/><use href="#style" width="18" height="18"/></svg>Absatzformate</button>
   <button type="button"><svg class="ico" width="18" height="18"><path class="ln" stroke-width="2" d="M8 12l4.500-11L17 12M10 8.500h5.500"/><use href="#style" width="18" height="18"/></svg>Zeichenformate</button>
   <button type="button"><svg class="ico" width="18" height="18"><path class="ln" stroke-width="1.500" d="M4 7V2h13v12h-6"/><path fill="#777" d="M5 3h11v10H9V7H5z"/><use href="#style" width="18" height="18"/></svg>Objektformate</button></div>
  <div class="pgroup"><div class="grip"></div>
   <button type="button"><svg class="ico" width="18" height="19"><circle cx="7" cy="7" r="7"/><path fill="#4a4a48" d="M3 3l4-1 1 3-3 2 2 4-3-1-2-4zM9 3h4v3h-3z"/><path stroke="#4a4a48" d="M8 6q2-2 3 1v3l6 2q2 0 1 7H10L6 13l2-1z"/></svg>Hyperlinks</button></div>
  <div class="pgroup"><div class="grip"></div>
   <button type="button"><svg class="ico" width="18" height="14"><path d="M2 0h1v14H2zM4 1h8v5H4zM4 8h13v5H4z"/></svg>Ausrichten</button>
   <button type="button"><svg class="ico" width="18" height="16"><path d="M1 0h9v5h6v10H7v-5H1z"/><path stroke="#4a4a48" fill="#aaa" d="M6.500 4.500h4v6h-4z"/></svg>Pathfinder</button></div>
  <div class="pgroup"><div class="grip"></div>
   <button type="button"><span class="fxicon">fx</span>Effekte</button></div>
  <div class="pgroup"><div class="grip"></div>
   <button type="button"><svg class="ico" width="18" height="16"><use href="#wrapc"/></svg>Textumfluss</button></div>
  <div class="pgroup"><div class="grip"></div>
   <button type="button"><svg class="ico" width="18" height="16"><use href="#books"/></svg>Commag-Bibliothek</button>
   <button type="button"><svg class="ico" width="18" height="16"><use href="#books"/></svg>4eck-Media-Bibliothek</button>
   <button type="button"><svg class="ico" width="18" height="16"><use href="#books"/></svg>Print-Layouts-Bibliothek</button></div>
  <div class="pgroup"><div class="grip"></div>
   <button type="button"><svg class="ico" width="18" height="14" viewBox="1 0 18 14"><rect x="0" y="3" width="21" height="11" rx="5"/><circle cx="13" cy="7" r="7"/><path fill="none" stroke="#4a4a48" stroke-width="1.300" d="M8 10L6 11Q2.500 11 2.500 8.500T6 5.500q2 0 4 2l3 3q5 1 5-3t-4-4.500q-3-1-4 1M9 10q2 2 4 .5"/></svg>CC-Bibliotheken</button></div>
 </aside>
</div>
</div>

<div class="watermark" aria-hidden="true"><svg width="40" height="60" fill="none" stroke="currentColor" stroke-width="4"><path d="M16 43Q-3 18 4 4q12-6 26 12M16 43q-12-2-10 8 6 8 20 2"/></svg><div class="position-absolute bottom-0 start-0 ms-1">inkKurs</div></div>

<script src="https://cdn.jsdelivr.net/npm/bootstrap@5.3.0/dist/js/bootstrap.bundle.min.js"></script>
<script>
// Rulers: one step is half a millimetre at 200 %
const step = 4.72, hr = document.getElementById('hr'), vr = document.getElementById('vr');
const tick = i => i % 10 === 0 ? 16 : i % 2 === 0 ? 5 : 3;
function drawRulers() {
  const w = hr.parentNode.clientWidth, t = vr.parentNode.clientHeight;
  let h = '', v = '<text x="2" y="4">5</text>';
  for (let i = -4; 22 + i * step < w; i++) {
    const x = Math.round(22 + i * step);
    h += `<path class="rule" d="M${x}.5 17v-${tick(i)}"/>`;
    if (i % 10 === 0 && x + 20 < w) h += `<text x="${x + 2}" y="10">${50 + i / 2}</text>`;
  }
  for (let i = -5; 26 + i * step < t; i++) {
    const y = Math.round(26 + i * step);
    v += `<path class="rule" d="M16 ${y}.5h-${tick(i)}"/>`;
    if (i % 10 === 0 && y + 28 < t) v += `<text y="${y + 1}">${[...String(250 + i / 2)].map(d => `<tspan x="2" dy="8">${d}</tspan>`).join('')}</text>`;
  }
  hr.innerHTML = h + '<path d="M721.5 0v17" stroke="#ddd" stroke-dasharray="1 1"/>';
  vr.innerHTML = v;
}
drawRulers();
addEventListener('resize', drawRulers);
</script>
</body>
</html>
